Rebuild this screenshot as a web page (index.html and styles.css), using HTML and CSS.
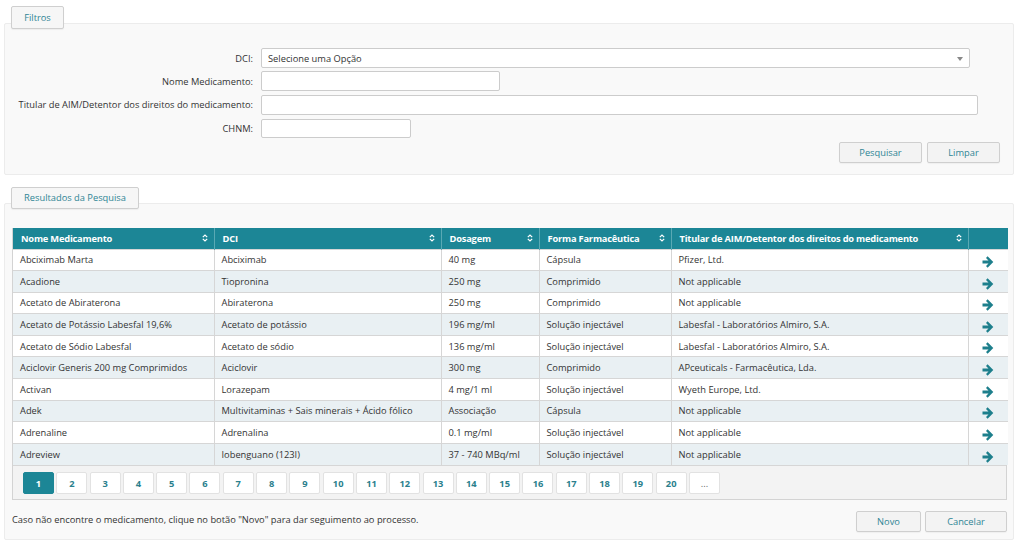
FILE: index.html
```html
<!DOCTYPE html>
<html lang="pt">
<head>
<meta charset="utf-8">
<title>Pesquisa de Medicamentos</title>
<link rel="stylesheet" href="styles.css">
</head>
<body>
<section class="group group-filters">
  <div class="tab">Filtros</div>
  <div class="panel filters">
    <div class="frow">
      <label class="flabel">DCI:</label>
      <div class="select w-dci"><span>Selecione uma Opção</span><svg class="caret" width="6" height="4" viewBox="0 0 6 4"><path d="M0 0h6L3 4z" fill="#888"/></svg></div>
    </div>
    <div class="frow">
      <label class="flabel">Nome Medicamento:</label>
      <div class="input w-nome"></div>
    </div>
    <div class="frow">
      <label class="flabel">Titular de AIM/Detentor dos direitos do medicamento:</label>
      <div class="input w-tit"></div>
    </div>
    <div class="frow">
      <label class="flabel">CHNM:</label>
      <div class="input w-chnm"></div>
    </div>
    <div class="actions">
      <button class="btn b-pesq">Pesquisar</button>
      <button class="btn b-limp">Limpar</button>
    </div>
  </div>
</section>

<section class="group group-results">
  <div class="tab">Resultados da Pesquisa</div>
  <div class="panel results">
    <div class="tablebox">
      <table class="grid">
        <colgroup>
          <col class="c1"><col class="c2"><col class="c3"><col class="c4"><col class="c5"><col class="c6">
        </colgroup>
        <thead>
          <tr>
            <th><div class="th">Nome Medicamento<svg class="sort" width="6" height="8" viewBox="0 0 6 8"><path d="M0.8 3.2L3 1l2.2 2.2M0.8 4.8L3 7l2.2-2.2" fill="none" stroke="#fff" stroke-width="1.2"/></svg></div></th>
            <th><div class="th">DCI<svg class="sort" width="6" height="8" viewBox="0 0 6 8"><path d="M0.8 3.2L3 1l2.2 2.2M0.8 4.8L3 7l2.2-2.2" fill="none" stroke="#fff" stroke-width="1.2"/></svg></div></th>
            <th><div class="th">Dosagem<svg class="sort" width="6" height="8" viewBox="0 0 6 8"><path d="M0.8 3.2L3 1l2.2 2.2M0.8 4.8L3 7l2.2-2.2" fill="none" stroke="#fff" stroke-width="1.2"/></svg></div></th>
            <th><div class="th">Forma Farmacêutica<svg class="sort" width="6" height="8" viewBox="0 0 6 8"><path d="M0.8 3.2L3 1l2.2 2.2M0.8 4.8L3 7l2.2-2.2" fill="none" stroke="#fff" stroke-width="1.2"/></svg></div></th>
            <th><div class="th">Titular de AIM/Detentor dos direitos do medicamento<svg class="sort" width="6" height="8" viewBox="0 0 6 8"><path d="M0.8 3.2L3 1l2.2 2.2M0.8 4.8L3 7l2.2-2.2" fill="none" stroke="#fff" stroke-width="1.2"/></svg></div></th>
            <th></th>
          </tr>
        </thead>
        <tbody>
          <tr><td>Abciximab Marta</td><td>Abciximab</td><td>40 mg</td><td>Cápsula</td><td>Pfizer, Ltd.</td><td class="go"><svg width="12" height="12" viewBox="0 0 12 12"><path d="M0.5 4.4h6L4 1.9 5.6 0.3 11.3 6 5.6 11.7 4 10.1l2.5-2.5h-6z" fill="#1d7f8c"/></svg></td></tr>
          <tr><td>Acadione</td><td>Tiopronina</td><td>250 mg</td><td>Comprimido</td><td>Not applicable</td><td class="go"><svg width="12" height="12" viewBox="0 0 12 12"><path d="M0.5 4.4h6L4 1.9 5.6 0.3 11.3 6 5.6 11.7 4 10.1l2.5-2.5h-6z" fill="#1d7f8c"/></svg></td></tr>
          <tr><td>Acetato de Abiraterona</td><td>Abiraterona</td><td>250 mg</td><td>Comprimido</td><td>Not applicable</td><td class="go"><svg width="12" height="12" viewBox="0 0 12 12"><path d="M0.5 4.4h6L4 1.9 5.6 0.3 11.3 6 5.6 11.7 4 10.1l2.5-2.5h-6z" fill="#1d7f8c"/></svg></td></tr>
          <tr><td>Acetato de Potássio Labesfal 19,6%</td><td>Acetato de potássio</td><td>196 mg/ml</td><td>Solução injectável</td><td>Labesfal - Laboratórios Almiro, S.A.</td><td class="go"><svg width="12" height="12" viewBox="0 0 12 12"><path d="M0.5 4.4h6L4 1.9 5.6 0.3 11.3 6 5.6 11.7 4 10.1l2.5-2.5h-6z" fill="#1d7f8c"/></svg></td></tr>
          <tr><td>Acetato de Sódio Labesfal</td><td>Acetato de sódio</td><td>136 mg/ml</td><td>Solução injectável</td><td>Labesfal - Laboratórios Almiro, S.A.</td><td class="go"><svg width="12" height="12" viewBox="0 0 12 12"><path d="M0.5 4.4h6L4 1.9 5.6 0.3 11.3 6 5.6 11.7 4 10.1l2.5-2.5h-6z" fill="#1d7f8c"/></svg></td></tr>
          <tr><td>Aciclovir Generis 200 mg Comprimidos</td><td>Aciclovir</td><td>300 mg</td><td>Comprimido</td><td>APceuticals - Farmacêutica, Lda.</td><td class="go"><svg width="12" height="12" viewBox="0 0 12 12"><path d="M0.5 4.4h6L4 1.9 5.6 0.3 11.3 6 5.6 11.7 4 10.1l2.5-2.5h-6z" fill="#1d7f8c"/></svg></td></tr>
          <tr><td>Activan</td><td>Lorazepam</td><td>4 mg/1 ml</td><td>Solução injectável</td><td>Wyeth Europe, Ltd.</td><td class="go"><svg width="12" height="12" viewBox="0 0 12 12"><path d="M0.5 4.4h6L4 1.9 5.6 0.3 11.3 6 5.6 11.7 4 10.1l2.5-2.5h-6z" fill="#1d7f8c"/></svg></td></tr>
          <tr><td>Adek</td><td>Multivitaminas + Sais minerais + Ácido fólico</td><td>Associação</td><td>Cápsula</td><td>Not applicable</td><td class="go"><svg width="12" height="12" viewBox="0 0 12 12"><path d="M0.5 4.4h6L4 1.9 5.6 0.3 11.3 6 5.6 11.7 4 10.1l2.5-2.5h-6z" fill="#1d7f8c"/></svg></td></tr>
          <tr><td>Adrenaline</td><td>Adrenalina</td><td>0.1 mg/ml</td><td>Solução injectável</td><td>Not applicable</td><td class="go"><svg width="12" height="12" viewBox="0 0 12 12"><path d="M0.5 4.4h6L4 1.9 5.6 0.3 11.3 6 5.6 11.7 4 10.1l2.5-2.5h-6z" fill="#1d7f8c"/></svg></td></tr>
          <tr><td>Adreview</td><td>Iobenguano (123I)</td><td>37 - 740 MBq/ml</td><td>Solução injectável</td><td>Not applicable</td><td class="go"><svg width="12" height="12" viewBox="0 0 12 12"><path d="M0.5 4.4h6L4 1.9 5.6 0.3 11.3 6 5.6 11.7 4 10.1l2.5-2.5h-6z" fill="#1d7f8c"/></svg></td></tr>
        </tbody>
      </table>
      <div class="pager">
        <span class="pg active">1</span><span class="pg">2</span><span class="pg">3</span><span class="pg">4</span><span class="pg">5</span><span class="pg">6</span><span class="pg">7</span><span class="pg">8</span><span class="pg">9</span><span class="pg">10</span><span class="pg">11</span><span class="pg">12</span><span class="pg">13</span><span class="pg">14</span><span class="pg">15</span><span class="pg">16</span><span class="pg">17</span><span class="pg">18</span><span class="pg">19</span><span class="pg">20</span><span class="pg dots">...</span>
      </div>
    </div>
    <div class="footer">
      <p class="note">Caso não encontre o medicamento, clique no botão "Novo" para dar seguimento ao processo.</p>
      <div class="footer-btns">
        <button class="btn b-novo">Novo</button>
        <button class="btn b-canc">Cancelar</button>
      </div>
    </div>
  </div>
</section>
</body>
</html>
```

FILE: styles.css
```css
* { box-sizing: border-box; }
html, body { margin: 0; padding: 0; }
body {
  background: #ffffff;
  font-family: "Open Sans", "Noto Sans", "DejaVu Sans", sans-serif;
  font-size: 9.3px;
  color: #333;
  width: 1023px;
  height: 546px;
  overflow: hidden;
}

.group { margin-left: 4px; width: 1010px; }
.group-filters { padding-top: 6px; }
.group-results { padding-top: 12px; }

.tab {
  position: relative;
  z-index: 1;
  display: block;
  margin-left: 7px;
  margin-bottom: -6px;
  height: 23px;
  line-height: 21px;
  padding: 0;
  text-align: center;
  background: #f6f6f6;
  border: 1px solid #cfcfcf;
  border-radius: 2px;
  color: #2f8595;
  font-size: 9.3px;
  box-shadow: 0 1px 1px rgba(0,0,0,0.05);
}
.group-filters .tab { width: 53px; }
.group-results .tab { width: 128px; height: 22px; line-height: 20px; }

.panel {
  background: #f9f9f9;
  border: 1px solid #ececec;
  border-radius: 2px;
}

.filters { padding: 24px 13px 10px 0; height: 152px; }

.frow { display: flex; align-items: center; height: 20px; margin-bottom: 3.4px; }
.flabel {
  width: 248px;
  margin-right: 8px;
  text-align: right;
  white-space: nowrap;
  color: #333;
}
.input, .select {
  height: 20px;
  background: #fff;
  border: 1px solid #cccccc;
  border-radius: 2px;
}
.select {
  display: flex;
  align-items: center;
  justify-content: space-between;
  padding: 0 6px 0 6px;
  color: #333;
}
.caret { margin-top: 1px; }
.w-dci { width: 709px; }
.w-nome { width: 239px; }
.w-tit { width: 717px; }
.w-chnm { width: 150px; height: 19px; }

.actions { display: flex; justify-content: flex-end; gap: 5px; margin-top: 1.6px; }

.btn {
  height: 21px;
  background: #f3f3f3;
  border: 1px solid #cfcfcf;
  border-radius: 2px;
  color: #2f8595;
  font-family: "Open Sans", "Noto Sans", sans-serif;
  font-size: 9.3px;
  padding: 0;
  box-shadow: 0 1px 1px rgba(0,0,0,0.04);
}
.b-pesq { width: 83px; }
.b-limp { width: 73px; }
.b-novo { width: 65px; }
.b-canc { width: 82px; }

.results { padding: 24px 6px 6px 7px; height: 337px; }

.tablebox {
  border: 1px solid #d3d3d3;
  border-top: 0;
  background: #f3f3f3;
}
.grid {
  width: 100%;
  border-collapse: collapse;
  table-layout: fixed;
}
.c1 { width: 201px; }
.c2 { width: 227px; }
.c3 { width: 98px; }
.c4 { width: 132px; }
.c5 { width: 297px; }
.c6 { width: 40px; }

.grid th {
  background: #1c8696;
  color: #fff;
  font-weight: 700;
  text-align: left;
  height: 21px;
  padding: 0 6px 0 8px;
  border-left: 1px solid #5aa9b4;
  letter-spacing: -0.2px;
}
.grid th:first-child { border-left: 0; }
.th { display: flex; justify-content: space-between; align-items: center; }
.sort { flex: none; }

.grid td {
  height: 21.6px;
  padding: 0 7px;
  border-top: 1px solid #d6d6d6;
  border-left: 1px solid #d6d6d6;
  background: #fff;
  white-space: nowrap;
  overflow: hidden;
  color: #333;
}
.grid td:first-child { border-left: 0; }
.grid tbody tr:nth-child(even) td { background: #e9f0f3; }
.grid td.go { text-align: center; padding: 3px 0 0 0; }
.grid td.go svg { display: inline-block; vertical-align: middle; }

.pager {
  border-top: 1px solid #d6d6d6;
  padding: 6px 0 5px 10px;
  display: flex;
  gap: 2.3px;
}
.pg {
  width: 31px;
  height: 22px;
  line-height: 22px;
  text-align: center;
  background: #fff;
  border: 1px solid #e2e2e2;
  border-radius: 2px;
  color: #2b7f8d;
  font-weight: 700;
}
.pg.active { background: #1c8696; border-color: #1c8696; color: #fff; }
.pg.dots { font-weight: 400; color: #666; }

.footer { display: flex; justify-content: space-between; align-items: flex-start; margin-top: 11px; }
.note { margin: 2px 0 0 0; color: #333; }
.footer-btns { display: flex; gap: 4px; }
```
